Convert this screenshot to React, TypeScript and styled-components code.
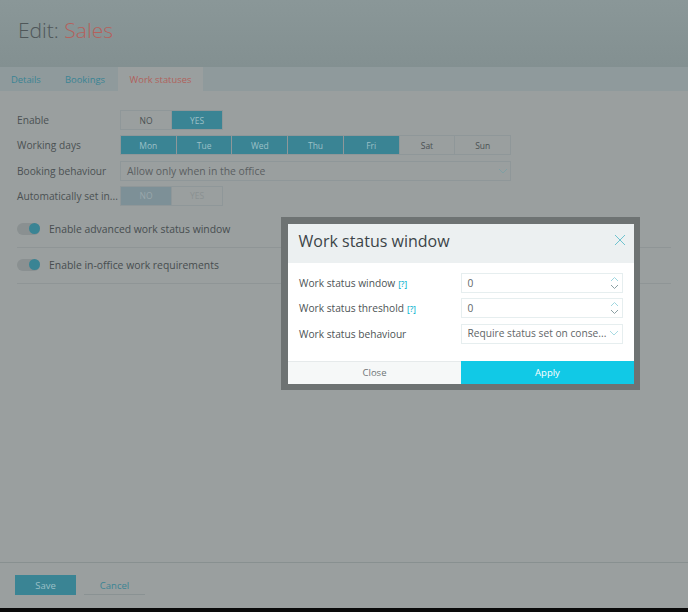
import React from "react";
import styled, { createGlobalStyle } from "styled-components";

const Global = createGlobalStyle`
  html, body { margin: 0; padding: 0; height: 612px; overflow: hidden; background: #9a9f9f; }
  body { font-family: "Open Sans", "Noto Sans", sans-serif; }
  * { box-sizing: border-box; }
`;

const Page = styled.div`
  position: relative;
  width: 688px;
  height: 612px;
  display: flex;
  flex-direction: column;
  background: #9a9f9f;
  color: #474d4f;
  overflow: hidden;
`;
const Header = styled.header`
  height: 67px;
  flex: none;
  padding: 15px 18px 0;
  background: linear-gradient(#8a9798, #839091);
  font-size: 21px;
  line-height: 30px;
  font-weight: 300;
  color: #4f5759;
`;
const Accent = styled.span`
  color: #b5615c;
`;
const TabBar = styled.nav`
  height: 24px;
  flex: none;
  display: flex;
  background: #8f9a9c;
  font-size: 9.4px;
`;
const Tab = styled.div<{ $active?: boolean; $w: number }>`
  width: ${(p) => p.$w}px;
  display: flex;
  align-items: center;
  justify-content: ${(p) => (p.$active ? "center" : "flex-start")};
  padding-left: ${(p) => (p.$active ? 0 : 11)}px;
  background: ${(p) => (p.$active ? "#9a9f9f" : "transparent")};
  color: ${(p) => (p.$active ? "#b0625c" : "#3a8494")};
  font-weight: 500;
`;
const Body = styled.main`
  flex: 1;
  padding: 19px 17px 0;
  display: flex;
  flex-direction: column;
`;
const Row = styled.div`
  display: grid;
  grid-template-columns: 103px 391px;
  align-items: center;
  height: 20px;
  margin-bottom: 5.3px;
`;
const Label = styled.div`
  font-size: 10.2px;
  color: #4b5153;
  white-space: nowrap;
`;
const Segments = styled.div<{ $w?: number }>`
  display: flex;
  width: ${(p) => p.$w ?? 391}px;
  height: 20px;
  border: 1px solid #8f9799;
`;
const Segment = styled.div<{ $on?: boolean; $muted?: boolean; $faded?: boolean }>`
  flex: 1;
  display: flex;
  align-items: center;
  justify-content: center;
  font-size: 8.5px;
  font-weight: 500;
  background: ${(p) => (p.$on ? "#3a8494" : p.$muted ? "#7d9097" : "transparent")};
  color: ${(p) => (p.$on ? "#9cc0c7" : p.$muted ? "#9aa7ab" : p.$faded ? "#8a9192" : "#4b5153")};
  & + & {
    border-left: 1px solid ${(p) => (p.$on ? "#5c9aa8" : "#8f9799")};
  }
`;
const SelectBox = styled.div`
  height: 20px;
  width: 391px;
  border: 1px solid #8f9799;
  display: flex;
  align-items: center;
  justify-content: space-between;
  padding: 0 2px 0 6px;
  font-size: 10.4px;
  color: #5a6062;
`;
const ToggleRow = styled.div`
  display: flex;
  align-items: center;
  gap: 9px;
  width: 654px;
  height: 36px;
  padding-bottom: 2px;
  border-bottom: 1px solid #8f9596;
  font-size: 10.4px;
  font-weight: 500;
  color: #474d4f;
`;
const ToggleGroup = styled.div`
  margin-top: 1px;
`;
const Track = styled.div`
  position: relative;
  width: 23px;
  height: 12px;
  border-radius: 6px;
  background: #8a9091;
`;
const Knob = styled.div`
  position: absolute;
  right: 0;
  top: 0.5px;
  width: 11px;
  height: 11px;
  border-radius: 50%;
  background: #3a8494;
`;
const Footer = styled.footer`
  flex: none;
  height: 46px;
  border-top: 1px solid #889090;
  padding-top: 12px;
  display: flex;
  align-items: flex-start;
  gap: 8px;
  padding-left: 15px;
  background: #9a9f9f;
`;
const SaveButton = styled.div`
  width: 61px;
  height: 20px;
  background: #3a8494;
  color: #9cc0c7;
  font-size: 9.5px;
  display: flex;
  align-items: center;
  justify-content: center;
`;
const CancelButton = styled.div`
  width: 61px;
  height: 20px;
  padding-top: 1px;
  border-bottom: 1px solid #8a9293;
  color: #3a8494;
  font-size: 9.5px;
  display: flex;
  align-items: center;
  justify-content: center;
`;
const BottomStrip = styled.div`
  flex: none;
  height: 4px;
  background: #0a0a0a;
`;
const ModalFrame = styled.div`
  position: absolute;
  left: 281px;
  top: 217px;
  width: 359px;
  height: 173px;
  border: 7px solid #6e7373;
  border-right-width: 6px;
  border-bottom-width: 6px;
  background: #fff;
  display: flex;
  flex-direction: column;
`;
const ModalHead = styled.div`
  height: 39px;
  flex: none;
  display: flex;
  align-items: center;
  justify-content: space-between;
  padding: 0 8px 5px 10.5px;
  background: #ecf0f1;
  font-size: 16px;
  color: #3c4448;
  font-weight: 500;
`;
const CloseIcon = styled.svg`
  width: 12px;
  height: 12px;
  margin-top: -3px;
  fill: none;
  stroke: #6fc3cf;
  stroke-width: 1;
`;
const ModalBody = styled.div`
  flex: 1;
  padding: 10px 11px 0;
`;
const ModalRow = styled.div`
  display: grid;
  grid-template-columns: 162px 162px;
  align-items: center;
  height: 20px;
  margin-bottom: 5.4px;
`;
const ModalLabel = styled.div`
  font-size: 10.2px;
  color: #4c5355;
  white-space: nowrap;
`;
const Help = styled.span`
  color: #1fb9d2;
  font-size: 8px;
  font-weight: 600;
  margin-left: 3px;
`;
const Field = styled.div`
  height: 20px;
  border: 1px solid #e6eeef;
  display: flex;
  align-items: center;
  justify-content: space-between;
  padding: 0 3px 1px 5.5px;
  font-size: 10.2px;
  color: #5f6668;
  white-space: nowrap;
`;
const ModalFoot = styled.div`
  height: 23px;
  flex: none;
  display: flex;
  border-top: 1px solid #e6eaeb;
`;
const CloseButton = styled.div`
  width: 173px;
  display: flex;
  align-items: center;
  justify-content: center;
  padding-bottom: 1px;
  background: #f6f8f8;
  color: #6e7476;
  font-size: 9.5px;
`;
const ApplyButton = styled.div`
  flex: 1;
  display: flex;
  align-items: center;
  justify-content: center;
  background: #11c9e6;
  color: #fff;
  font-size: 9.5px;
  margin-top: -1px;
`;
const Icon = styled.svg<{ $c: string }>`
  flex: none;
  fill: none;
  stroke: ${(p) => p.$c};
  stroke-width: 1;
`;

const Chevron = ({ c }: { c: string }) => (
  <Icon $c={c} width="10" height="6" viewBox="0 0 10 6">
    <path d="M1 1l4 4 4-4" />
  </Icon>
);
const Spinner = () => (
  <Icon $c="#9fd6df" width="9" height="14" viewBox="0 0 9 14">
    <path d="M1 5l3.500-3.500L8 5" />
    <path d="M1 9l3.500 3.500L8 9" stroke="#8a9fa3" />
  </Icon>
);

const days = ["Mon", "Tue", "Wed", "Thu", "Fri"];

export default function App() {
  return (
    <Page>
      <Global />
      <Header>
        Edit: <Accent>Sales</Accent>
      </Header>
      <TabBar>
        <Tab $w={54}>Details</Tab>
        <Tab $w={64}>Bookings</Tab>
        <Tab $w={85} $active>
          Work statuses
        </Tab>
      </TabBar>
      <Body>
        <Row>
          <Label>Enable</Label>
          <Segments $w={103}>
            <Segment>NO</Segment>
            <Segment $on>YES</Segment>
          </Segments>
        </Row>
        <Row>
          <Label>Working days</Label>
          <Segments>
            {days.map((d) => (
              <Segment key={d} $on>
                {d}
              </Segment>
            ))}
            <Segment>Sat</Segment>
            <Segment>Sun</Segment>
          </Segments>
        </Row>
        <Row>
          <Label>Booking behaviour</Label>
          <SelectBox>
            Allow only when in the office
            <Chevron c="#7f9fa3" />
          </SelectBox>
        </Row>
        <Row>
          <Label>Automatically set in...</Label>
          <Segments $w={103}>
            <Segment $muted>NO</Segment>
            <Segment $faded>YES</Segment>
          </Segments>
        </Row>
        <ToggleGroup>
          <ToggleRow>
            <Track>
              <Knob />
            </Track>
            Enable advanced work status window
          </ToggleRow>
          <ToggleRow>
            <Track>
              <Knob />
            </Track>
            Enable in-office work requirements
          </ToggleRow>
        </ToggleGroup>
      </Body>
      <Footer>
        <SaveButton>Save</SaveButton>
        <CancelButton>Cancel</CancelButton>
      </Footer>
      <BottomStrip />
      <ModalFrame>
        <ModalHead>
          Work status window
          <CloseIcon viewBox="0 0 12 12">
            <path d="M1 1l10 10M11 1L1 11" />
          </CloseIcon>
        </ModalHead>
        <ModalBody>
          <ModalRow>
            <ModalLabel>
              Work status window<Help>[?]</Help>
            </ModalLabel>
            <Field>
              0
              <Spinner />
            </Field>
          </ModalRow>
          <ModalRow>
            <ModalLabel>
              Work status threshold<Help>[?]</Help>
            </ModalLabel>
            <Field>
              0
              <Spinner />
            </Field>
          </ModalRow>
          <ModalRow>
            <ModalLabel>Work status behaviour</ModalLabel>
            <Field>
              Require status set on conse...
              <Chevron c="#a9dbe3" />
            </Field>
          </ModalRow>
        </ModalBody>
        <ModalFoot>
          <CloseButton>Close</CloseButton>
          <ApplyButton>Apply</ApplyButton>
        </ModalFoot>
      </ModalFrame>
    </Page>
  );
}
